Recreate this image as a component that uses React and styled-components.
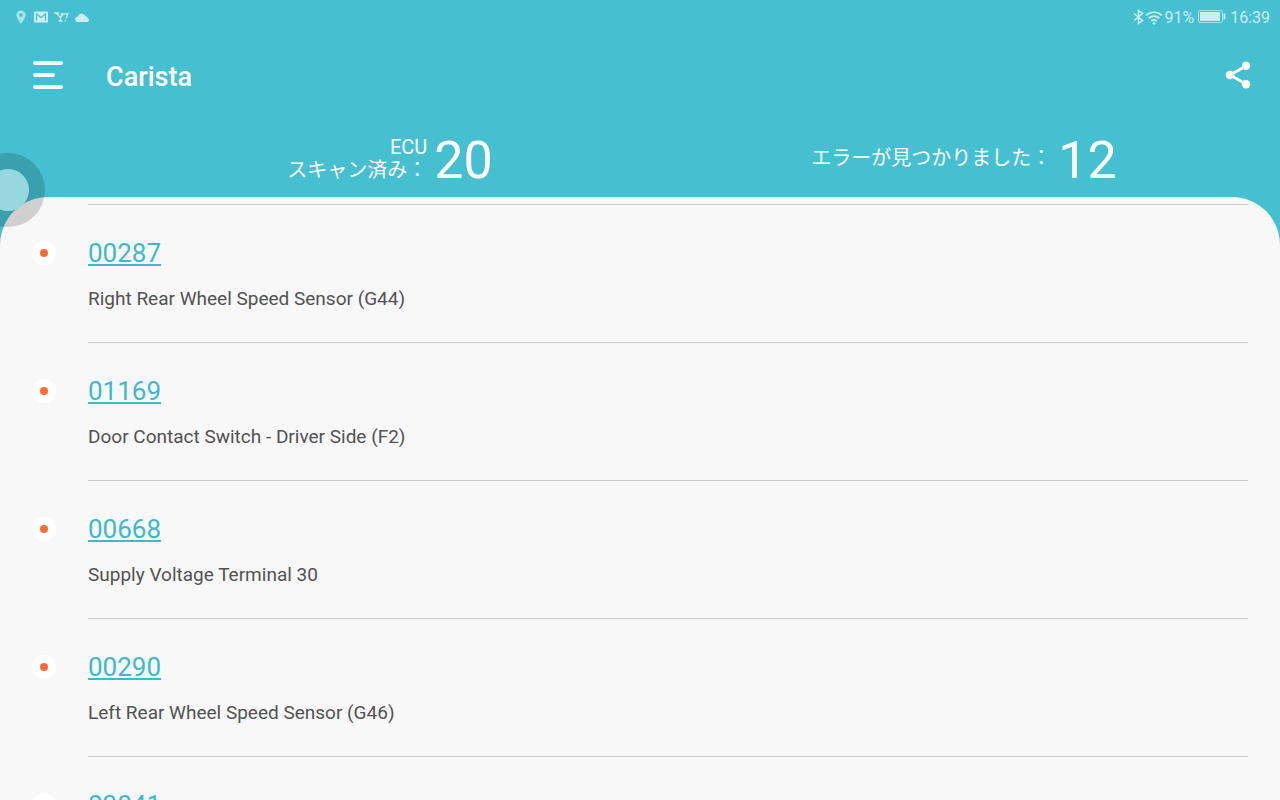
import React from 'react';
import styled, { createGlobalStyle } from 'styled-components';

const GlobalStyle = createGlobalStyle`
  * {
    box-sizing: border-box;
  }
  body {
    margin: 0;
    background: #46bfd0;
    font-family: Roboto, 'Noto Sans CJK JP', sans-serif;
  }
`;

const Page = styled.div`
  position: relative;
  display: flex;
  flex-direction: column;
  height: 100vh;
  overflow: hidden;
  color: #fff;
`;

const StatusBar = styled.div`
  display: flex;
  justify-content: space-between;
  align-items: center;
  height: 32px;
  padding: 2px 10px 0 14px;
  color: #c9eef4;
  font-size: 16px;
`;

const StatusGroup = styled.div`
  display: flex;
  align-items: center;
  gap: ${(props) => props.$gap}px;
  svg {
    display: block;
  }
`;

const AppBar = styled.header`
  display: flex;
  align-items: center;
  height: 86px;
  padding: 0 22px 0 28px;
`;

const IconButton = styled.button`
  display: flex;
  align-items: center;
  justify-content: center;
  width: 40px;
  height: 40px;
  padding: 0;
  border: 0;
  background: none;
  color: #fff;
  cursor: pointer;
`;

const Title = styled.h1`
  flex: 1;
  margin: 0;
  padding: 4px 0 0 38px;
  font-size: 27px;
  font-weight: 500;
  line-height: 32px;
`;

const Stats = styled.div`
  display: grid;
  grid-template-columns: 1fr 1fr;
  height: 79px;
  padding: 0 29px 0 103px;
`;

const Stat = styled.div`
  display: flex;
  align-items: center;
  justify-content: center;
  gap: 7px;
`;

const StatLabel = styled.span`
  padding-top: 2px;
  font-size: 20px;
  line-height: 23px;
  text-align: right;
`;

const StatValue = styled.span`
  padding-top: 6px;
  font-size: 52px;
  line-height: 60px;
`;

const Sheet = styled.main`
  flex: 1;
  min-height: 0;
  padding-top: 7px;
  overflow: hidden;
  border-radius: 48px 48px 0 0;
  background: #f8f8f8;
`;

const FaultList = styled.ul`
  margin: 0;
  padding: 0 32px;
  list-style: none;
`;

const FaultItem = styled.li`
  display: flex;
  height: 138px;
`;

const Marker = styled.span`
  display: flex;
  align-items: center;
  justify-content: center;
  width: 24px;
  height: 24px;
  margin: 37px 32px 0 0;
  border-radius: 50%;
  background: #fff;
  &::before {
    content: '';
    width: 8px;
    height: 8px;
    border-radius: 50%;
    background: #fa6b36;
  }
`;

const FaultBody = styled.div`
  flex: 1;
  padding-top: 32px;
  border-top: 1px solid #c9c9c9;
`;

const FaultCode = styled.a`
  display: inline-block;
  color: #3fb9ca;
  font-size: 26px;
  line-height: 32px;
  text-decoration: underline;
`;

const FaultName = styled.p`
  margin: 18px 0 0;
  color: #525252;
  font-size: 19px;
  line-height: 24px;
`;

const AssistiveButton = styled.button`
  position: absolute;
  top: 153px;
  left: -29px;
  width: 74px;
  height: 74px;
  padding: 16px;
  border: 0;
  border-radius: 50%;
  background: rgba(0, 0, 0, 0.16);
  &::before {
    content: '';
    display: block;
    height: 42px;
    border-radius: 50%;
    background: #96d7e0;
  }
`;

const faults = [
  { code: '00287', name: 'Right Rear Wheel Speed Sensor (G44)' },
  { code: '01169', name: 'Door Contact Switch - Driver Side (F2)' },
  { code: '00668', name: 'Supply Voltage Terminal 30' },
  { code: '00290', name: 'Left Rear Wheel Speed Sensor (G46)' },
  { code: '03041', name: '' },
];

const PinIcon = () => (
  <svg width="14" height="16" viewBox="0 0 14 16" fill="currentColor" opacity="0.75">
    <path
      fillRule="evenodd"
      d="M7 1.500a4.600 4.600 0 0 0-4.600 4.600C2.400 9.300 7 15 7 15s4.600-5.700 4.600-8.900A4.600 4.600 0 0 0 7 1.500zm0 2.800a1.800 1.800 0 1 1 0 3.600 1.800 1.800 0 0 1 0-3.600z"
    />
  </svg>
);

const MailIcon = () => (
  <svg width="14" height="12" viewBox="0 0 14 12">
    <rect y="0.500" width="14" height="11" rx="1" fill="currentColor" />
    <path d="M2.500 9.800V3l4.500 3.500L11.500 3v6.800" fill="none" stroke="#46bfd0" strokeWidth="1.200" />
  </svg>
);

const NewsIcon = () => (
  <svg width="15" height="10" viewBox="0 0 15 10" fill="none" stroke="currentColor">
    <path d="M0 1h5M6.500 2h4M2 1l4.500 4.500M9 2L6.500 5.500V9M4.500 9h4" strokeWidth="1.400" />
    <path d="M10.500 2h3.500l-2 4.500M11.300 8.200l-.5 1.300" strokeWidth="1.300" />
  </svg>
);

const CloudIcon = () => (
  <svg width="15" height="9" viewBox="0 0 15 9" fill="currentColor">
    <path d="M2.800 9a2.600 2.600 0 0 1-.2-5.200A4 4 0 0 1 10 2.600a3 3 0 0 1 2.300 2.200A2.200 2.200 0 0 1 12.500 9z" />
  </svg>
);

const BluetoothIcon = () => (
  <svg width="11" height="16" viewBox="0 0 11 16" fill="none" stroke="currentColor" strokeWidth="1.500">
    <path d="M1 4.500l8.500 7-4 3V1.500l4 3-8.500 7" />
  </svg>
);

const WifiIcon = () => (
  <svg width="18" height="15" viewBox="0 0 18 15" fill="none" stroke="currentColor" strokeWidth="1.700">
    <path d="M1 5.500a11.500 11.500 0 0 1 16 0M3.700 8.300a7.600 7.600 0 0 1 10.600 0M6.300 11a4 4 0 0 1 5.400 0" />
    <circle cx="9" cy="13.300" r="1.400" fill="currentColor" stroke="none" />
  </svg>
);

const BatteryIcon = () => (
  <svg width="28" height="14" viewBox="0 0 28 14">
    <rect x="0.500" y="0.500" width="24" height="12" rx="1.500" fill="none" stroke="currentColor" opacity="0.700" />
    <rect x="2" y="2" width="20" height="9" fill="currentColor" />
    <rect x="25.500" y="3.500" width="1.800" height="6" fill="currentColor" />
  </svg>
);

const MenuIcon = () => (
  <svg width="30" height="28" viewBox="0 0 30 28" stroke="currentColor" strokeWidth="4" strokeLinecap="round">
    <path d="M2 2h26M2 14h18M2 26h26" />
  </svg>
);

const ShareIcon = () => (
  <svg width="26" height="28" viewBox="0 0 26 28" fill="currentColor">
    <path d="M21 5L5 14l16 9" fill="none" stroke="currentColor" strokeWidth="2.800" />
    <circle cx="21" cy="4.700" r="4.200" />
    <circle cx="5" cy="14" r="4.300" />
    <circle cx="21" cy="23.300" r="4.200" />
  </svg>
);

const App = () => (
  <Page>
    <GlobalStyle />
    <StatusBar>
      <StatusGroup $gap={6}>
        <PinIcon />
        <MailIcon />
        <NewsIcon />
        <CloudIcon />
      </StatusGroup>
      <StatusGroup $gap={4}>
        <StatusGroup $gap={1}>
          <BluetoothIcon />
          <WifiIcon />
          <span>91%</span>
        </StatusGroup>
        <BatteryIcon />
        <span>16:39</span>
      </StatusGroup>
    </StatusBar>
    <AppBar>
      <IconButton aria-label="Menu">
        <MenuIcon />
      </IconButton>
      <Title>Carista</Title>
      <IconButton aria-label="Share">
        <ShareIcon />
      </IconButton>
    </AppBar>
    <Stats>
      <Stat>
        <StatLabel>
          ECU
          <br />
          スキャン済み：
        </StatLabel>
        <StatValue>20</StatValue>
      </Stat>
      <Stat>
        <StatLabel>エラーが見つかりました：</StatLabel>
        <StatValue>12</StatValue>
      </Stat>
    </Stats>
    <Sheet>
      <FaultList>
        {faults.map(({ code, name }) => (
          <FaultItem key={code}>
            <Marker />
            <FaultBody>
              <FaultCode href={`#${code}`}>{code}</FaultCode>
              {name && <FaultName>{name}</FaultName>}
            </FaultBody>
          </FaultItem>
        ))}
      </FaultList>
    </Sheet>
    <AssistiveButton aria-label="Navigation" />
  </Page>
);

export default App;
